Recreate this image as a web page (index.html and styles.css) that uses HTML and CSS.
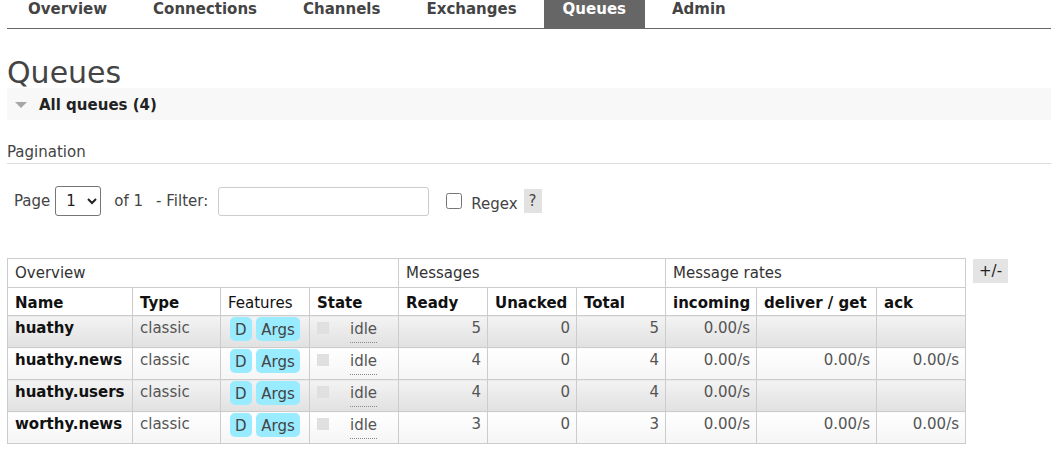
FILE: index.html
```
<!DOCTYPE html>
<html lang="en">
<head>
    <meta charset="UTF-8">
    <title>RabbitMQ Management: Queues</title>
    <link rel="stylesheet" href="styles.css">
</head>
<body>
    <div id="menu">
        <ul>
            <li><a href="#">Overview</a></li>
            <li><a href="#">Connections</a></li>
            <li><a href="#">Channels</a></li>
            <li><a href="#">Exchanges</a></li>
            <li class="selected"><a href="#">Queues</a></li>
            <li><a href="#">Admin</a></li>
        </ul>
    </div>

    <div id="main">
        <h1>Queues</h1>
        <div class="section">
            <h2>
                <svg class="toggle" width="12" height="6" viewBox="0 0 12 6"><polygon points="0,0 12,0 6,6" fill="#a6a6a6"/></svg>
                All queues (4)
            </h2>

            <h3>Pagination</h3>
            <div class="pagination">
                <label>Page</label>
                <select class="page-select">
                    <option>1</option>
                </select>
                <label class="of">of 1</label>
                <label class="filter">- Filter:</label>
                <input type="text" class="filter-input">
                <input type="checkbox" class="regex-check">
                <label class="regex">Regex</label>
                <span class="help">?</span>
            </div>

            <div class="list-wrap">
                <table class="list">
                    <colgroup>
                        <col style="width: 125px">
                        <col style="width: 88px">
                        <col style="width: 89px">
                        <col style="width: 89px">
                        <col style="width: 89px">
                        <col style="width: 89px">
                        <col style="width: 89px">
                        <col style="width: 91px">
                        <col style="width: 120px">
                        <col style="width: 89px">
                    </colgroup>
                    <thead>
                        <tr class="group">
                            <th colspan="4">Overview</th>
                            <th colspan="3">Messages</th>
                            <th colspan="3">Message rates</th>
                        </tr>
                        <tr class="cols">
                            <th>Name</th>
                            <th>Type</th>
                            <th class="plain">Features</th>
                            <th>State</th>
                            <th>Ready</th>
                            <th>Unacked</th>
                            <th>Total</th>
                            <th>incoming</th>
                            <th>deliver / get</th>
                            <th>ack</th>
                        </tr>
                    </thead>
                    <tbody>
                        <tr class="alt1">
                            <td class="name">huathy</td>
                            <td>classic</td>
                            <td class="features"><abbr class="type">D</abbr> <abbr class="type">Args</abbr></td>
                            <td class="state"><span class="status"></span><abbr class="idle">idle</abbr></td>
                            <td class="r">5</td>
                            <td class="r">0</td>
                            <td class="r">5</td>
                            <td class="r">0.00/s</td>
                            <td class="r"></td>
                            <td class="r"></td>
                        </tr>
                        <tr class="alt2">
                            <td class="name">huathy.news</td>
                            <td>classic</td>
                            <td class="features"><abbr class="type">D</abbr> <abbr class="type">Args</abbr></td>
                            <td class="state"><span class="status"></span><abbr class="idle">idle</abbr></td>
                            <td class="r">4</td>
                            <td class="r">0</td>
                            <td class="r">4</td>
                            <td class="r">0.00/s</td>
                            <td class="r">0.00/s</td>
                            <td class="r">0.00/s</td>
                        </tr>
                        <tr class="alt1">
                            <td class="name">huathy.users</td>
                            <td>classic</td>
                            <td class="features"><abbr class="type">D</abbr> <abbr class="type">Args</abbr></td>
                            <td class="state"><span class="status"></span><abbr class="idle">idle</abbr></td>
                            <td class="r">4</td>
                            <td class="r">0</td>
                            <td class="r">4</td>
                            <td class="r">0.00/s</td>
                            <td class="r"></td>
                            <td class="r"></td>
                        </tr>
                        <tr class="alt2">
                            <td class="name">worthy.news</td>
                            <td>classic</td>
                            <td class="features"><abbr class="type">D</abbr> <abbr class="type">Args</abbr></td>
                            <td class="state"><span class="status"></span><abbr class="idle">idle</abbr></td>
                            <td class="r">3</td>
                            <td class="r">0</td>
                            <td class="r">3</td>
                            <td class="r">0.00/s</td>
                            <td class="r">0.00/s</td>
                            <td class="r">0.00/s</td>
                        </tr>
                    </tbody>
                </table>
                <span class="columns-link">+/-</span>
            </div>
        </div>
    </div>
</body>
</html>
```

FILE: styles.css
```
* {
    box-sizing: border-box;
}

body {
    margin: 0;
    font: 15px/18px Verdana, "DejaVu Sans", sans-serif;
    color: #444;
    background: #fff;
}

/* top menu */
#menu {
    margin-left: 7px;
    border-bottom: 1px solid #666;
}

#menu ul {
    display: flex;
    gap: 8px;
    margin: 0;
    padding: 0 0 0 2px;
    list-style: none;
}

#menu a {
    display: block;
    padding: 0 19px 10px;
    font-weight: bold;
    color: #444;
    text-decoration: none;
}

#menu .selected a {
    background: #666;
    color: #fff;
}

#main {
    padding-left: 7px;
}

h1 {
    margin: 29px 0 0;
    font-size: 30px;
    line-height: 30px;
    font-weight: normal;
    color: #444;
}

.section h2 {
    display: flex;
    align-items: center;
    margin: 0;
    padding: 8px 0 6px 8px;
    background: #f8f8f8;
    font-size: 15px;
    line-height: 18px;
    color: #222;
}

.toggle {
    margin-right: 12px;
}

h3 {
    margin: 23px 0 0;
    padding-bottom: 2px;
    border-bottom: 1px solid #ddd;
    font-size: 15px;
    font-weight: normal;
    color: #444;
}

/* pagination */
.pagination {
    display: flex;
    align-items: center;
    height: 30px;
    margin-top: 22px;
    padding-left: 7px;
}

.page-select {
    width: 46px;
    height: 30px;
    margin-left: 5px;
    padding-left: 6px;
    font: 15px Verdana, "DejaVu Sans", sans-serif;
    color: #222;
    border: 1px solid #767676;
    border-radius: 3px;
    background: #fff;
}

.of {
    margin-left: 13px;
}

.filter {
    margin-left: 13px;
}

.filter-input {
    width: 211px;
    height: 29px;
    margin-left: 10px;
    border: 1px solid #ccc;
    border-radius: 3px;
    font: 15px Verdana, "DejaVu Sans", sans-serif;
}

.regex-check {
    width: 16px;
    height: 16px;
    margin: 0 0 0 17px;
}

.regex {
    margin: 6px 0 0 9px;
}

.help {
    margin-left: 6px;
    padding: 3px 5px;
    background: #e2e2e2;
    color: #444;
}

/* queue table */
.list-wrap {
    display: flex;
    align-items: flex-start;
    margin-top: 42px;
}

table.list {
    width: 959px;
    table-layout: fixed;
    border-collapse: collapse;
    border: 1px solid #ccc;
}

table.list th,
table.list td {
    border: 1px solid #ccc;
    text-align: left;
    vertical-align: top;
    white-space: nowrap;
    line-height: 18px;
}

table.list tr.group th {
    padding: 5px 7px;
    font-weight: normal;
    color: #333;
}

table.list tr.cols th {
    padding: 6px 7px 3px;
    font-weight: bold;
    color: #111;
}

table.list tr.cols th.plain {
    font-weight: normal;
}

table.list td {
    padding: 3px 7px 10px;
    color: #555;
}

.alt1 td {
    background: linear-gradient(#f3f3f3, #e1e1e1);
}

.alt2 td {
    background: linear-gradient(#fff, #f5f5f5);
}

table.list td.name {
    font-weight: bold;
    color: #111;
}

table.list td.r {
    text-align: right;
    padding-right: 6px;
}

table.list td.features {
    padding: 1px 7px 6px 9px;
}

abbr.type {
    display: inline-block;
    padding: 4px 5px 2px;
    border-radius: 5px;
    background: #99ebff;
    color: #444;
    text-decoration: none;
}

table.list td.state {
    padding: 4px 7px 4px;
}

.status {
    display: inline-block;
    width: 12px;
    height: 12px;
    margin: 2px 21px 0 0;
    vertical-align: top;
    background: #e0e0e0;
}

abbr.idle {
    display: inline-block;
    padding-bottom: 4px;
    border-bottom: 1px dotted #888;
    text-decoration: none;
}

.columns-link {
    margin: 1px 0 0 7px;
    padding: 3px 6px;
    background: #e4e4e4;
    color: #222;
}
```
